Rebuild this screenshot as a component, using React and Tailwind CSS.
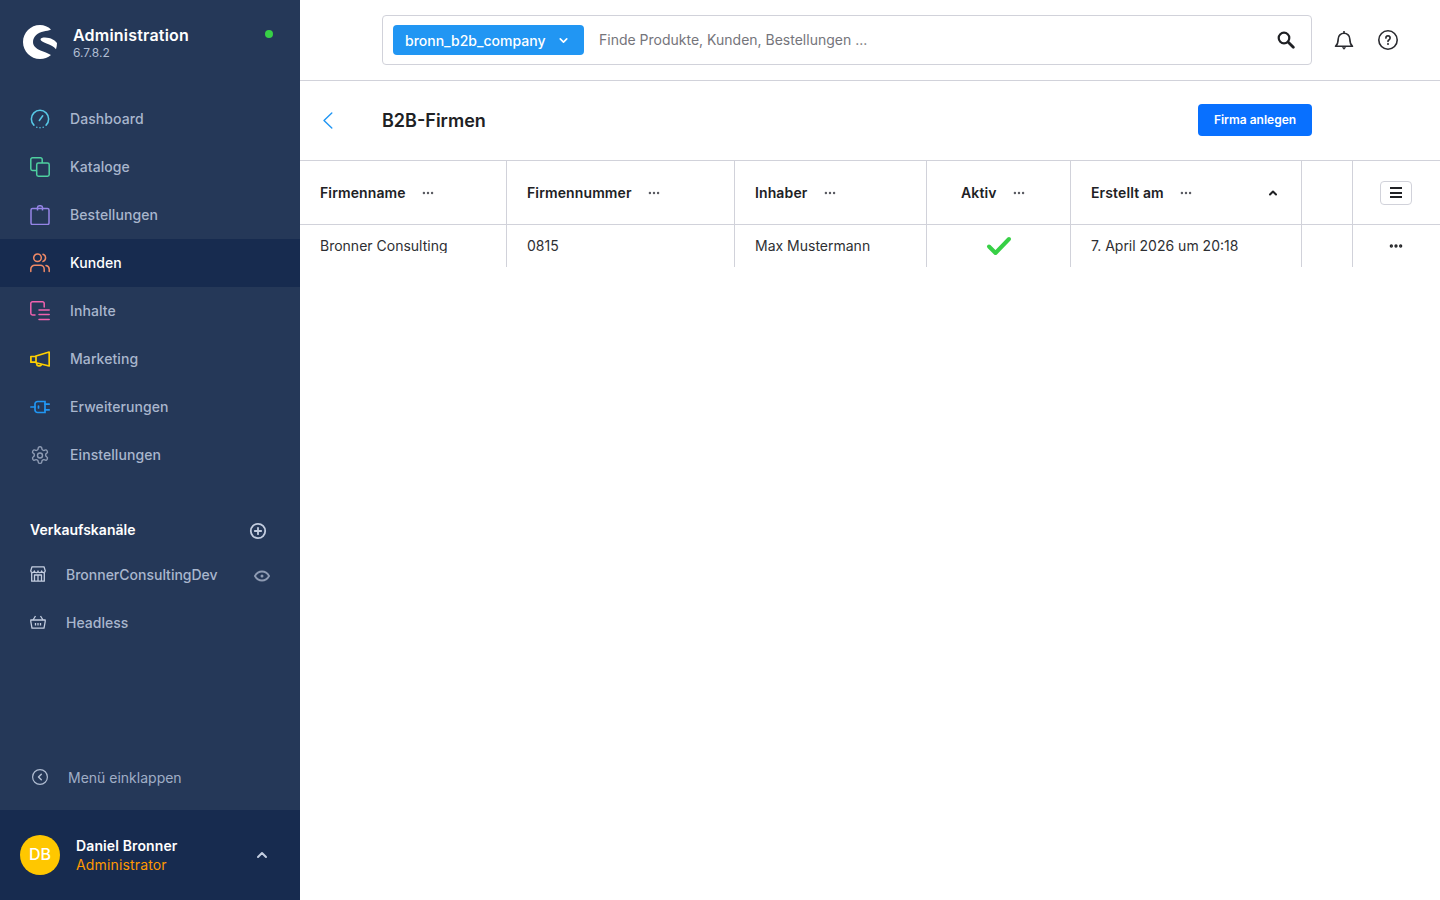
import React from "react";
import { ChevronDown, ChevronUp, Ellipsis } from "lucide-react";

const FONT = "font-['Inter','Liberation_Sans',sans-serif]";

// Sidebar icons
const DashboardIcon = () => (
  <svg width="22" height="22" viewBox="0 0 22 22" fill="none" stroke="#57c8e6" strokeWidth="1.7" strokeLinecap="round">
    <path d="M4.300 17.700A9.500 9.500 0 1 1 17.700 17.700" />
    <path d="M7.500 20.100h.01M11 20.600h.01M14.500 20.100h.01" />
    <path d="M10.300 12.700L14 7.500" />
  </svg>
);
const CatalogIcon = () => (
  <svg width="20" height="20" viewBox="0 0 20 20" fill="none" stroke="#4fd0a0" strokeWidth="1.5" strokeLinejoin="round">
    <path d="M6 13.500H2.500a1.700 1.700 0 0 1-1.700-1.700V2.500A1.700 1.700 0 0 1 2.500.8h8a1.700 1.700 0 0 1 1.700 1.700V6" />
    <rect x="6.700" y="6" width="12.500" height="13.200" rx="1.700" />
  </svg>
);
const OrderIcon = () => (
  <svg width="20" height="20" viewBox="0 0 20 20" fill="none" stroke="#9584e6" strokeWidth="1.5" strokeLinejoin="round">
    <path d="M2.500 3.500h15a1.500 1.500 0 0 1 1.500 1.500v13a1.500 1.500 0 0 1-1.500 1.500h-15A1.500 1.500 0 0 1 1 18V5a1.500 1.500 0 0 1 1.500-1.500z" />
    <path d="M7.500 5.500V2.500a2.500 1.800 0 0 1 5 0v3" />
  </svg>
);
const CustomerIcon = () => (
  <svg width="20" height="20" viewBox="0 0 20 20" fill="none" stroke="#f08a66" strokeWidth="1.5" strokeLinecap="round">
    <circle cx="7.500" cy="4.800" r="3.800" />
    <path d="M.8 18.500v-2.300a4 4 0 0 1 4-4h5.400a4 4 0 0 1 4 4v2.300" />
    <path d="M13 1.200a3.800 3.800 0 0 1 0 7.200M16 12.400a4 4 0 0 1 3.200 3.800v2.300" />
  </svg>
);
const ContentIcon = () => (
  <svg width="20" height="20" viewBox="0 0 20 20" fill="none" stroke="#f062ae" strokeWidth="1.5" strokeLinecap="round">
    <path d="M5 14H2.500A1.700 1.700 0 0 1 .8 12.300V2.500A1.700 1.700 0 0 1 2.500.8h10a1.700 1.700 0 0 1 1.700 1.700V6" />
    <path d="M9 9h10.200M9 13.500h10.200M9 18.500h10.200" />
  </svg>
);
const MarketingIcon = () => (
  <svg width="20" height="16" viewBox="0 0 20 16" fill="none" stroke="#ffd000" strokeWidth="1.700" strokeLinejoin="round">
    <path d="M19.200 1L6 5v6.700l13.200 3.300z" />
    <path d="M6 5.500H.9v5.700H6" />
    <path d="M6.800 12v1.300a1.500 1.500 0 0 0 1.500 1.500h1.500a1.500 1.500 0 0 0 1.500-1.500" />
  </svg>
);
const ExtensionIcon = () => (
  <svg width="20" height="14" viewBox="0 0 20 14" fill="none" stroke="#2196f3" strokeWidth="1.700" strokeLinecap="round">
    <path d="M7.500 1.500H15v11H7.500A2.500 2.500 0 0 1 5 10V4a2.500 2.500 0 0 1 2.500-2.500z" />
    <path d="M.8 7H5M15 4.200h4.200M15 9.800h4.200" />
    <path d="M8.500 6v2" />
  </svg>
);
const SettingsIcon = () => (
  <svg width="21" height="21" viewBox="0 0 24 24" fill="none" stroke="#8e9bb3" strokeWidth="1.700" strokeLinejoin="round">
    <path d="M12.200 1.500h-.4a2 2 0 0 0-2 2v.2a2 2 0 0 1-1 1.700l-.4.300a2 2 0 0 1-2 0l-.2-.1a2 2 0 0 0-2.700.7l-.2.400a2 2 0 0 0 .7 2.700l.2.100a2 2 0 0 1 1 1.700v.5a2 2 0 0 1-1 1.700l-.2.100a2 2 0 0 0-.7 2.700l.2.400a2 2 0 0 0 2.700.7l.2-.1a2 2 0 0 1 2 0l.4.300a2 2 0 0 1 1 1.700v.2a2 2 0 0 0 2 2h.4a2 2 0 0 0 2-2v-.2a2 2 0 0 1 1-1.700l.4-.3a2 2 0 0 1 2 0l.2.100a2 2 0 0 0 2.700-.7l.2-.4a2 2 0 0 0-.7-2.700l-.2-.1a2 2 0 0 1-1-1.700v-.5a2 2 0 0 1 1-1.700l.2-.1a2 2 0 0 0 .7-2.700l-.2-.4a2 2 0 0 0-2.700-.7l-.2.1a2 2 0 0 1-2 0l-.4-.3a2 2 0 0 1-1-1.700v-.2a2 2 0 0 0-2-2z" />
    <circle cx="12" cy="12" r="3" />
  </svg>
);
const StoreIcon = () => (
  <svg width="16" height="16" viewBox="0 0 16 16" fill="none" stroke="#c3cde0" strokeWidth="1.300" strokeLinejoin="round">
    <path d="M2 .8h12l1.200 3.800a1.800 1.800 0 0 1-3.600.3 1.800 1.800 0 0 1-3.600 0 1.800 1.800 0 0 1-3.600 0 1.800 1.800 0 0 1-3.600-.3z" />
    <path d="M1.700 6.500v8.700h12.600V6.500" />
    <path d="M4.500 15V9h7v6M8 9v6" />
  </svg>
);
const BasketIcon = () => (
  <svg width="16" height="14" viewBox="0 0 16 14" fill="none" stroke="#c3cde0" strokeWidth="1.300" strokeLinejoin="round">
    <path d="M.8 5h14.400v1.500l-1.200 6.700H2L.8 6.500z" />
    <path d="M3 5l2.500-4M13 5l-2.500-4" />
    <path d="M5.500 8v2.500M8 8v2.500M10.500 8v2.500" />
  </svg>
);

const NAV_ITEMS = [
  { label: "Dashboard", icon: <DashboardIcon /> },
  { label: "Kataloge", icon: <CatalogIcon /> },
  { label: "Bestellungen", icon: <OrderIcon /> },
  { label: "Kunden", icon: <CustomerIcon />, active: true },
  { label: "Inhalte", icon: <ContentIcon /> },
  { label: "Marketing", icon: <MarketingIcon /> },
  { label: "Erweiterungen", icon: <ExtensionIcon /> },
  { label: "Einstellungen", icon: <SettingsIcon /> },
];

const Sidebar = () => (
  <aside className="w-[300px] h-screen shrink-0 bg-[#253858] flex flex-col">
    {/* Logo row */}
    <div className="h-[95px] shrink-0 flex pl-[23px] pr-[27px] pt-[25px]">
      <svg width="34" height="34" viewBox="0 0 34 34" className="shrink-0">
        <path
          fill="#fff"
          d="M17 0C7.600 0 0 7.600 0 17s7.600 17 17 17c4.200 0 8-1.400 11-3.900-3.200-2.100-7-3-10.500-4.600C13.200 23.600 10 21 10 17c0-5.500 5-9.600 10.500-10.600 2.700-.5 5.400-.6 7.500-1.900C25 1.700 21.200 0 17 0z"
        />
        <path
          fill="#fff"
          d="M22 12.500c-2.500 0-4.500.6-4.500 2 0 1.600 2.800 2.700 6 4 3.400 1.400 7.300 3 9.500 5.700.7-2 1-4.200 1-6.200-.8-1.300-2.200-2.500-4.300-3.600-2.300-1.200-5-1.900-7.700-1.900z"
        />
      </svg>
      <div className="ml-4 flex-1">
        <div className="text-white text-[16px] leading-[20px] font-semibold tracking-[0.2px]">Administration</div>
        <div className="text-[#b0bdd2] text-[12px] leading-[16px]">6.7.8.2</div>
      </div>
      <span className="w-2 h-2 rounded-full bg-[#37d046] mt-[5px]" />
    </div>

    {/* Main nav */}
    <nav className="shrink-0">
      {NAV_ITEMS.map((item) => (
        <div
          key={item.label}
          className={`h-12 flex items-center pl-[30px] ${item.active ? "bg-[#172b4f] text-white" : "text-[#a9b6cd]"}`}>
          <span className="w-5 h-5 flex items-center justify-center shrink-0">{item.icon}</span>
          <span className="ml-5 mb-[2px] text-[14px] font-medium tracking-[0.08px]">{item.label}</span>
        </div>
      ))}
    </nav>

    {/* Sales channels */}
    <div className="mt-[39px] h-6 shrink-0 flex items-center justify-between pl-[30px] pr-[33px]">
      <span className="mb-[2px] text-white text-[14px] font-semibold">Verkaufskanäle</span>
      <svg width="18" height="18" viewBox="0 0 18 18" fill="none" stroke="#c3cde0" strokeWidth="1.800" strokeLinecap="round" className="mt-[2px]">
        <circle cx="9" cy="9" r="7.200" />
        <path d="M9 5.800v6.400M5.800 9h6.400" />
      </svg>
    </div>
    <div className="mt-[9px] shrink-0">
      <div className="h-12 flex items-center pl-[30px] pr-[30px] text-[#a9b6cd]">
        <span className="w-4 flex justify-center mb-[2px]"><StoreIcon /></span>
        <span className="ml-5 mb-[2px] flex-1 text-[14px] font-medium">BronnerConsultingDev</span>
        <svg width="16" height="12" viewBox="0 0 16 12" fill="none" stroke="#8e9bb3" strokeWidth="1.800" className="mt-[2px]">
          <path d="M.9 6C2.600 3 5 1.500 8 1.500S13.400 3 15.100 6c-1.700 3-4.100 4.500-7.100 4.500S2.600 9 .9 6z" />
          <circle cx="8" cy="6" r="1.500" fill="#8e9bb3" stroke="none" />
        </svg>
      </div>
      <div className="h-12 flex items-center pl-[30px] text-[#a9b6cd]">
        <span className="w-4 flex justify-center mb-[2px]"><BasketIcon /></span>
        <span className="ml-5 mb-[2px] text-[14px] font-medium">Headless</span>
      </div>
    </div>

    {/* Collapse */}
    <div className="mt-auto h-[66px] shrink-0 flex items-center pl-[32px] text-[#a0aec6]">
      <svg width="16" height="16" viewBox="0 0 16 16" fill="none" stroke="#b0bdd2" strokeWidth="1.200" strokeLinecap="round" strokeLinejoin="round">
        <circle cx="8" cy="8" r="7.400" />
        <path d="M9.300 5.200L6.500 8l2.800 2.800" strokeWidth="1.500" />
      </svg>
      <span className="ml-5 text-[14px]">Menü einklappen</span>
    </div>

    {/* User */}
    <div className="h-[90px] shrink-0 bg-[#172b4f] flex items-center pl-5 pr-[30px]">
      <div className="w-10 h-10 rounded-full bg-[#ffc700] text-white text-[16px] font-medium flex items-center justify-center pb-[2px]">DB</div>
      <div className="ml-4 flex-1">
        <div className="text-white text-[14px] leading-[19px] font-semibold tracking-[0.12px]">Daniel Bronner</div>
        <div className="text-[#ff9800] text-[14px] leading-[19px] tracking-[0.15px]">Administrator</div>
      </div>
      <ChevronUp size={16} strokeWidth={3} className="text-[#c3cde0]" />
    </div>
  </aside>
);

const Topbar = () => (
  <header className="h-[81px] shrink-0 border-b border-[#d1d2da] flex items-center pl-[82px]">
    <div className="w-[930px] h-[50px] border border-[#d1d2da] rounded-[4px] flex items-center pl-[10px] pr-[16px]">
      <div className="w-[191px] h-[30px] bg-[#2196f3] rounded-[4px] text-white text-[14px] font-medium flex items-center pl-3">
        <span className="flex-1">bronn_b2b_company</span>
        <ChevronDown size={13} strokeWidth={3} className="mr-[14px]" />
      </div>
      <span className="ml-[15px] mb-[2px] flex-1 text-[14px] text-[#75757b]">Finde Produkte, Kunden, Bestellungen ...</span>
      <svg width="18" height="18" viewBox="0 0 18 18" fill="none" stroke="#1f2024" strokeLinecap="round">
        <circle cx="7" cy="7" r="5.300" strokeWidth="2.200" />
        <path d="M11.300 11.300l5 5" strokeWidth="2.800" />
      </svg>
    </div>
    <svg width="20" height="21" viewBox="0 0 20 21" fill="none" stroke="#2a2b30" strokeWidth="1.600" strokeLinejoin="round" className="ml-[22px]">
      <path d="M1.500 16.300c2-1.800 2.700-3.600 2.700-7.300a5.800 5.800 0 0 1 11.600 0c0 3.700.7 5.500 2.700 7.300z" />
      <path d="M10 1v2" />
      <path d="M7.800 17.200L10 19.700l2.200-2.500z" fill="#2a2b30" stroke="none" />
    </svg>
    <svg width="20" height="20" viewBox="0 0 20 20" fill="none" className="ml-[24px]">
      <circle cx="10" cy="10" r="9.200" stroke="#2a2b30" strokeWidth="1.600" />
      <path d="M7.900 7.900a2.100 2.100 0 1 1 3.200 1.800c-.7.400-1.100.8-1.100 1.600" stroke="#2a2b30" strokeWidth="1.700" strokeLinecap="round" />
      <circle cx="10" cy="14" r="1" fill="#2a2b30" />
    </svg>
  </header>
);

const COLUMNS = "grid-cols-[206px_1px_227px_1px_191px_1px_143px_1px_230px_1px_50px_1px_87px]";

const HeadCell = ({ label, className = "pl-5", children }) => (
  <div className={`flex items-center text-[14px] font-semibold tracking-[0.12px] text-[#202124] ${className}`}>
    <span>{label}</span>
    <Ellipsis size={14} strokeWidth={2.200} className="ml-[15.500px] text-[#5b5c63]" />
    {children}
  </div>
);

const Line = () => <div className="bg-[#d1d2da]" />;

const BodyCell = ({ children, className = "pl-5 pt-3" }) => (
  <div className={`h-[42px] text-[14px] leading-[18px] text-[#2e2f33] overflow-hidden ${className}`}>
    {children}
  </div>
);

const CompanyTable = () => (
  <div>
    <div className={`grid ${COLUMNS} h-[64px] border-b border-[#d1d2da]`}>
      <HeadCell label="Firmenname" />
      <Line />
      <HeadCell label="Firmennummer" />
      <Line />
      <HeadCell label="Inhaber" />
      <Line />
      <HeadCell label="Aktiv" className="pl-[34px]" />
      <Line />
      <HeadCell label="Erstellt am">
        <ChevronUp size={12} strokeWidth={4} className="ml-auto mr-[22px] text-[#202124]" />
      </HeadCell>
      <Line />
      <div />
      <Line />
      <div className="flex items-center pl-[27px]">
        <div className="w-[32px] h-[24px] border border-[#d1d2da] rounded-[4px] flex flex-col gap-[2.500px] items-center justify-center">
          <span className="w-3 h-[2px] bg-[#202124]" />
          <span className="w-3 h-[2px] bg-[#202124]" />
          <span className="w-3 h-[2px] bg-[#202124]" />
        </div>
      </div>
    </div>
    <div className={`grid ${COLUMNS} h-[42px]`}>
      <BodyCell>
        {/* the g is cut off at its lowest pixels */}
        <div className="h-[16px] overflow-hidden">Bronner Consulting</div>
      </BodyCell>
      <Line />
      <BodyCell>0815</BodyCell>
      <Line />
      <BodyCell>Max Mustermann</BodyCell>
      <Line />
      <BodyCell className="pl-[59px] pt-[11px]">
        <svg width="26" height="20" viewBox="0 0 26 20" fill="none" stroke="#37d046" strokeWidth="4" strokeLinecap="round" strokeLinejoin="round">
          <path d="M3 10.500L9.500 17 23 3" />
        </svg>
      </BodyCell>
      <Line />
      <BodyCell>7. April 2026 um 20:18</BodyCell>
      <Line />
      <BodyCell />
      <Line />
      <BodyCell className="pl-[35px] pt-[13px]">
        <Ellipsis size={16} strokeWidth={3} className="text-[#202124]" />
      </BodyCell>
    </div>
  </div>
);

export default function App() {
  return (
    <div className={`${FONT} flex h-screen w-full overflow-hidden bg-white`}>
      <Sidebar />
      <main className="flex-1 flex flex-col min-w-0">
        <Topbar />
        {/* Page title */}
        <div className="h-[80px] shrink-0 border-b border-[#d1d2da] flex items-center pl-[23px] pr-[128px]">
          <svg width="10" height="17" viewBox="0 0 10 17" fill="none" stroke="#2196f3" strokeWidth="1.400" strokeLinecap="round" strokeLinejoin="round">
            <path d="M8.800 1L1 8.500 8.800 16" />
          </svg>
          <h1 className="ml-[49px] flex-1 text-[18px] font-semibold text-[#202124]">B2B-Firmen</h1>
          <button className="w-[114px] h-[32px] mb-[2px] bg-[#0870ff] rounded-[4px] text-white text-[12px] font-semibold">
            Firma anlegen
          </button>
        </div>
        <CompanyTable />
      </main>
    </div>
  );
}
